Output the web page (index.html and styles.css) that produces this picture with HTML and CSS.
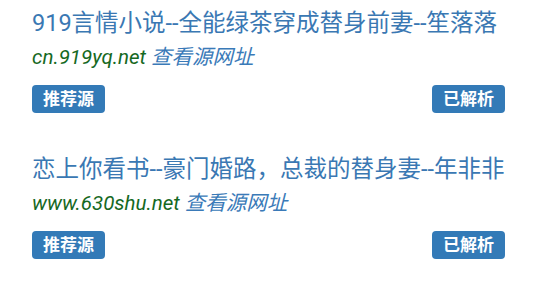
FILE: index.html
```html
<!DOCTYPE html>
<html>
<head>
	<meta charset="UTF-8">
	<meta name="viewport" content="width=device-width, initial-scale=1.0">
	<title>书源列表</title>
	<link rel="stylesheet" href="styles.css">
</head>
<body>
	<div class="list">
		<div class="item">
			<div class="title">919言情小说--全能绿茶穿成替身前妻--笙落落</div>
			<div class="source"><span class="host">cn.919yq.net</span> <a class="link" href="#">查看源网址</a></div>
			<div class="row">
				<span class="label">推荐源</span>
				<span class="label">已解析</span>
			</div>
		</div>
		<div class="item">
			<div class="title">恋上你看书--豪门婚路，总裁的替身妻--年非非</div>
			<div class="source"><span class="host">www.630shu.net</span> <a class="link" href="#">查看源网址</a></div>
			<div class="row">
				<span class="label">推荐源</span>
				<span class="label">已解析</span>
			</div>
		</div>
	</div>
</body>
</html>
```

FILE: styles.css
```css
body {
	margin: 0;
	background: #fff;
	font-family: Roboto, "Noto Sans CJK SC", sans-serif;
}
.list {
	padding: 8px 34px 0 32px;
}
.item {
	margin-bottom: 41px;
}
.item:last-child {
	margin-bottom: 0;
}
.title {
	font-size: 23.5px;
	line-height: 30px;
	color: #3a78b3;
	white-space: nowrap;
}
.source {
	margin-top: 7px;
	font-size: 20.5px;
	line-height: 24px;
	font-style: italic;
}
.host {
	color: #16691f;
}
.link {
	color: #3a7ab8;
	text-decoration: none;
}
.row {
	display: flex;
	justify-content: space-between;
	margin-top: 16px;
}
.label {
	display: inline-block;
	height: 28px;
	line-height: 28px;
	padding: 0 11px;
	border-radius: 4px;
	background: #337ab7;
	color: #fff;
	font-size: 17px;
	font-weight: bold;
}
```
